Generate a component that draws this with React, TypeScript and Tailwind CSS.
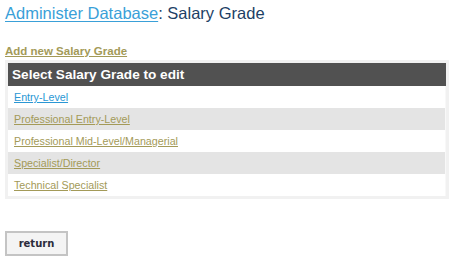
export default function App() {
  const rows = [
    { t: "Entry-Level", blue: true },
    { t: "Professional Entry-Level" },
    { t: "Professional Mid-Level/Managerial" },
    { t: "Specialist/Director" },
    { t: "Technical Specialist" },
  ];
  return (
    <div className="w-[458px] h-[265px] bg-white px-[5px] pt-[2px]" style={{ fontFamily: '"Liberation Sans", Arial, sans-serif' }}>
      <div className="text-[16.5px] leading-[22px] text-[#1d3f66]">
        <a className="text-[#3aa0d8] underline underline-offset-2">Administer Database</a>: Salary Grade
      </div>
      <div className="mt-[21px] text-[11.5px] leading-[13px] font-bold">
        <a className="text-[#a39a58] underline">Add new Salary Grade</a>
      </div>
      <div className="mt-[2px] w-[444px] bg-[#f1f1f1] p-[3px]">
        <div className="h-[23px] bg-[#515151] text-white font-bold text-[13.6px] leading-[23px] pl-[4px]">Select Salary Grade to edit</div>
        {rows.map((r, i) => (
          <div key={i} className={`h-[22px] leading-[22px] pl-[6px] text-[10.7px] border-r border-[#f8f8f8] ${i % 2 === 1 ? "bg-[#e4e4e4]" : "bg-white"}`}>
            <a className={`underline ${r.blue ? "text-[#2a97d4]" : "text-[#a39a58]"}`}>{r.t}</a>
          </div>
        ))}
      </div>
      <button className="mt-[32px] w-[63px] h-[25px] border-2 border-[#c4c4c4] bg-[#f4f4f4] text-[10px] font-bold text-[#2b2b3b]" style={{ fontFamily: '"DejaVu Sans", Verdana, sans-serif' }}>
        return
      </button>
    </div>
  );
}
